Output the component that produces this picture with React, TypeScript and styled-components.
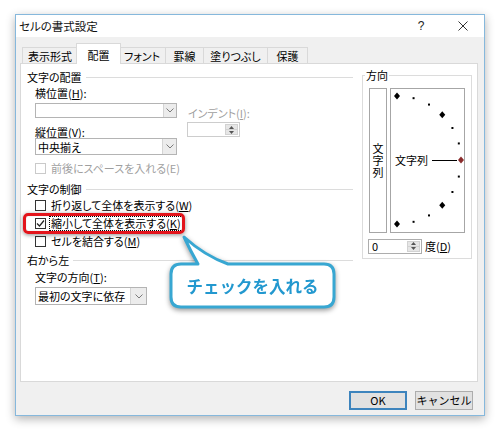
import React from "react";
import styled, { createGlobalStyle } from "styled-components";

const GlobalStyle = createGlobalStyle`
  html, body { margin: 0; padding: 0; background: #ffffff; }
  body {
    font-family: "Noto Sans CJK JP", "Noto Sans", sans-serif;
    font-feature-settings: "palt" 1;
    font-size: 11px;
    color: #000;
  }
  * { box-sizing: border-box; }
`;

const Stage = styled.div`
  position: relative;
  width: 500px;
  height: 431px;
  padding: 14px 0 0 15px;
  overflow: hidden;
`;

const Window = styled.div`
  width: 470px;
  height: 402px;
  border: 1px solid #86b8dc;
  background: #f0f0f0;
  box-shadow: 0 3px 9px rgba(0, 0, 0, 0.3);
  display: flex;
  flex-direction: column;
`;

const TitleBar = styled.div`
  height: 22px;
  background: #ffffff;
  display: flex;
  align-items: center;
  gap: 2px;
  padding: 0 1px 0 3px;
`;

const TitleText = styled.span`
  flex: 1;
  font-size: 11.5px;
  line-height: 22px;
  color: #111;
`;

const TitleButton = styled.span`
  width: 40px;
  height: 22px;
  display: flex;
  align-items: center;
  justify-content: center;
  font-family: "Liberation Sans", sans-serif;
  font-size: 12px;
  color: #222;
`;

const Body = styled.div`
  flex: 1;
  display: flex;
  flex-direction: column;
  padding: 0 6px 0 4px;
`;

const TabRow = styled.div`
  height: 26px;
  display: flex;
  align-items: flex-end;
  padding-left: 2px;
`;

const Tab = styled.div<{ $w: number; $active?: boolean; $first?: boolean }>`
  width: ${(p) => p.$w}px;
  height: ${(p) => (p.$active ? 21 : 16)}px;
  margin: ${(p) =>
    p.$active ? "0 -2px -1px -2px" : p.$first ? "0" : "0 0 0 -1px"};
  padding-top: ${(p) => (p.$active ? 1 : 0)}px;
  border: 1px solid #d9d9d9;
  border-bottom: none;
  background: ${(p) => (p.$active ? "#ffffff" : "#f0f0f0")};
  display: flex;
  align-items: center;
  justify-content: center;
  font-size: 11px;
  line-height: 14px;
  position: relative;
  z-index: ${(p) => (p.$active ? 2 : 1)};
`;

const Panel = styled.div`
  height: 319px;
  background: #ffffff;
  border: 1px solid #d9d9d9;
  display: flex;
  gap: 9px;
  padding: 6px 5px 0 6px;
`;

const LeftCol = styled.div`
  width: 326px;
  display: flex;
  flex-direction: column;
`;

const GroupHeader = styled.div<{ $mt?: number }>`
  margin-top: ${(p) => p.$mt ?? 0}px;
  display: flex;
  align-items: center;
  height: 14px;
  line-height: 14px;
  font-size: 11px;
  &::after {
    content: "";
    flex: 1;
    height: 1px;
    margin-left: 4px;
    background: #dcdcdc;
  }
`;

const FieldLabel = styled.div<{ $mt?: number; $disabled?: boolean; $indent?: number }>`
  margin-top: ${(p) => p.$mt ?? 0}px;
  padding-left: ${(p) => p.$indent ?? 8}px;
  height: 12px;
  line-height: 12px;
  font-size: 11px;
  white-space: nowrap;
  color: ${(p) => (p.$disabled ? "#9f9f9f" : "#000")};
`;

const ComboRow = styled.div<{ $mt?: number }>`
  margin-top: ${(p) => p.$mt ?? 0}px;
  display: flex;
  align-items: flex-start;
  gap: 10px;
`;

const Stack = styled.div<{ $pt?: number; $pl?: number }>`
  display: flex;
  flex-direction: column;
  padding-top: ${(p) => p.$pt ?? 0}px;
  padding-left: ${(p) => p.$pl ?? 0}px;
`;

const Combo = styled.div<{ $w: number; $h: number; $mt?: number; $ml?: number }>`
  width: ${(p) => p.$w}px;
  height: ${(p) => p.$h}px;
  margin-top: ${(p) => p.$mt ?? 0}px;
  margin-left: ${(p) => p.$ml ?? 0}px;
  border: 1px solid #b4b4b4;
  background: #ffffff;
  display: flex;
  align-items: stretch;
`;

const ComboText = styled.span`
  flex: 1;
  padding-left: 2px;
  display: flex;
  align-items: center;
  font-size: 11px;
  white-space: nowrap;
  overflow: hidden;
`;

const ComboButton = styled.span<{ $w: number }>`
  width: ${(p) => p.$w}px;
  border-left: 1px solid #d4d4d4;
  background: #ececec;
  display: flex;
  align-items: center;
  justify-content: center;
`;

const SpinBox = styled.div<{ $w: number; $h: number; $mt?: number; $disabled?: boolean }>`
  width: ${(p) => p.$w}px;
  height: ${(p) => p.$h}px;
  margin-top: ${(p) => p.$mt ?? 0}px;
  border: 1px solid ${(p) => (p.$disabled ? "#cdcdcd" : "#adadad")};
  background: #ffffff;
  display: flex;
  align-items: stretch;
  padding: 1px 1px 1px 0;
`;

const SpinValue = styled.span`
  flex: 1;
  padding-left: 3px;
  display: flex;
  align-items: center;
  font-size: 11px;
`;

const SpinButtons = styled.span`
  width: 13px;
  display: flex;
  flex-direction: column;
  background: #e6e6e6;
  border: 1px solid #d2d2d2;
`;

const SpinArrow = styled.span`
  flex: 1;
  display: flex;
  align-items: center;
  justify-content: center;
  & + & {
    border-top: 1px solid #d2d2d2;
  }
`;

const CheckRow = styled.div<{ $mt?: number; $disabled?: boolean }>`
  margin-top: ${(p) => p.$mt ?? 0}px;
  padding-left: 8px;
  height: 14px;
  display: flex;
  align-items: center;
  gap: 4px;
  color: ${(p) => (p.$disabled ? "#9f9f9f" : "#000")};
`;

const CheckBox = styled.span<{ $disabled?: boolean }>`
  width: 11px;
  height: 11px;
  border: 1px solid ${(p) => (p.$disabled ? "#cacaca" : "#333333")};
  background: #ffffff;
  display: flex;
  align-items: center;
  justify-content: center;
`;

const CheckLabel = styled.span<{ $focus?: boolean }>`
  font-size: 11px;
  line-height: 13px;
  white-space: nowrap;
  padding: 0 1px;
  outline: ${(p) => (p.$focus ? "1px dotted #000" : "none")};
`;

const OrientGroup = styled.fieldset`
  margin: -2px 0 0 0;
  padding: 0 6px 4px 2px;
  border: 1px solid #dcdcdc;
  width: 110px;
  align-self: flex-start;
  min-width: 0;
`;

const OrientLegend = styled.legend`
  padding: 0 1px;
  font-size: 11px;
  line-height: 14px;
`;

const OrientInner = styled.div`
  padding: 6px 0 0 4px;
  display: flex;
  flex-direction: column;
`;

const OrientBoxes = styled.div`
  display: flex;
  gap: 3px;
`;

const VerticalBox = styled.div`
  width: 18px;
  height: 145px;
  border: 1px solid #a6a6a6;
  display: flex;
  align-items: center;
  justify-content: center;
  padding-top: 1px;
`;

const VerticalText = styled.span`
  writing-mode: vertical-rl;
  text-orientation: upright;
  font-size: 11px;
  line-height: 14px;
  letter-spacing: 1px;
`;

const DialBox = styled.div`
  width: 75px;
  height: 145px;
  border: 1px solid #a6a6a6;
  display: flex;
`;

const DegreeRow = styled.div`
  margin-top: 5px;
  margin-left: -1px;
  display: flex;
  align-items: center;
  gap: 3px;
  font-size: 11px;
`;

const Footer = styled.div`
  flex: 1;
  display: flex;
  justify-content: flex-end;
  align-items: flex-start;
  gap: 8px;
  padding: 9px 5px 0 0;
`;

const DialogButton = styled.button<{ $default?: boolean }>`
  width: 58px;
  height: 19px;
  margin: 0;
  padding: 0;
  font-family: inherit;
  font-size: 11px;
  line-height: 1;
  color: #000;
  background: #e1e1e1;
  border: ${(p) => (p.$default ? "2px solid #3d84bd" : "1px solid #adadad")};
  display: flex;
  align-items: center;
  justify-content: center;
`;

const Highlight = styled.div`
  position: absolute;
  left: 23px;
  top: 213px;
  width: 162px;
  height: 21px;
  border: 3px solid #e3141b;
  border-radius: 5px;
  box-shadow: 0 1px 4px rgba(0, 0, 0, 0.45), inset 0 0 1px rgba(0, 0, 0, 0.3);
`;

const Callout = styled.div`
  position: absolute;
  left: 165px;
  top: 230px;
  width: 180px;
  height: 85px;
  filter: drop-shadow(0 2px 2.5px rgba(0, 0, 0, 0.4));
`;

const CalloutShape = styled.svg`
  position: absolute;
  left: 0;
  top: 0;
`;

const CalloutText = styled.div`
  position: absolute;
  left: 6px;
  top: 34px;
  width: 163px;
  height: 43px;
  display: flex;
  align-items: center;
  justify-content: center;
  font-size: 16.5px;
  font-weight: bold;
  font-feature-settings: normal;
  color: #2298cf;
  letter-spacing: 0;
`;

const Chevron = () => (
  <svg width="8" height="5" viewBox="0 0 8 5">
    <path d="M0.5 0.5 L4 4 L7.5 0.5" fill="none" stroke="#7a7a7a" strokeWidth="1" />
  </svg>
);

const ArrowUp = () => (
  <svg width="5" height="3" viewBox="0 0 5 3">
    <path d="M0 3 L2.5 0 L5 3 Z" fill="#555" />
  </svg>
);

const ArrowDown = () => (
  <svg width="5" height="3" viewBox="0 0 5 3">
    <path d="M0 0 L2.5 3 L5 0 Z" fill="#555" />
  </svg>
);

const CheckMark = () => (
  <svg width="9" height="9" viewBox="0 0 9 9">
    <path d="M1 4.5 L3.5 7 L8 1.5" fill="none" stroke="#222" strokeWidth="1.2" />
  </svg>
);

const CloseIcon = () => (
  <svg width="10" height="10" viewBox="0 0 10 10">
    <path d="M0.5 0.5 L9.5 9.5 M9.5 0.5 L0.5 9.5" stroke="#333" strokeWidth="1" />
  </svg>
);

const Dial = () => {
  const cx = 6;
  const cy = 71;
  const r = 64;
  const marks: React.ReactNode[] = [];
  for (let a = 90; a >= -90; a -= 15) {
    const rad = (a * Math.PI) / 180;
    const x = cx + r * Math.cos(rad);
    const y = cy - r * Math.sin(rad);
    if (a % 45 === 0) {
      marks.push(
        <polygon
          key={a}
          points={`${x},${y - 3.5} ${x + 3},${y} ${x},${y + 3.5} ${x - 3},${y}`}
          fill={a === 0 ? "#8a2c2c" : "#000"}
        />
      );
    } else {
      marks.push(<rect key={a} x={x - 1} y={y - 1} width={2} height={2} fill="#000" />);
    }
  }
  return (
    <svg width="73" height="143" viewBox="0 0 73 143">
      <text
        x="4"
        y="71"
        dominantBaseline="central"
        fontSize="11"
        fontFamily='"Noto Sans CJK JP", sans-serif'
        fill="#000"
      >
        文字列
      </text>
      <line x1="41" y1="71.5" x2="66" y2="71.5" stroke="#000" strokeWidth="1" />
      {marks}
    </svg>
  );
};

const tabs = [
  { label: "表示形式", w: 56 },
  { label: "配置", w: 45, active: true },
  { label: "フォント", w: 48 },
  { label: "罫線", w: 39 },
  { label: "塗りつぶし", w: 65 },
  { label: "保護", w: 41 },
];

export default function App() {
  return (
    <>
      <GlobalStyle />
      <Stage>
        <Window>
          <TitleBar>
            <TitleText>セルの書式設定</TitleText>
            <TitleButton>?</TitleButton>
            <TitleButton>
              <CloseIcon />
            </TitleButton>
          </TitleBar>
          <Body>
            <TabRow>
              {tabs.map((t, i) => (
                <Tab key={t.label} $w={t.w} $active={t.active} $first={i === 0}>
                  {t.label}
                </Tab>
              ))}
            </TabRow>
            <Panel>
              <LeftCol>
                <GroupHeader>文字の配置</GroupHeader>
                <FieldLabel $mt={3}>
                  横位置(<u>H</u>):
                </FieldLabel>
                <ComboRow $mt={4}>
                  <Stack>
                    <Combo $w={142} $h={15} $ml={8}>
                      <ComboText />
                      <ComboButton $w={13}>
                        <Chevron />
                      </ComboButton>
                    </Combo>
                    <FieldLabel $mt={8}>
                      縦位置(<u>V</u>):
                    </FieldLabel>
                    <Combo $w={142} $h={17} $ml={8}>
                      <ComboText>中央揃え</ComboText>
                      <ComboButton $w={14}>
                        <Chevron />
                      </ComboButton>
                    </Combo>
                  </Stack>
                  <Stack $pt={4}>
                    <FieldLabel $disabled $indent={1}>
                      インデント(<u>I</u>):
                    </FieldLabel>
                    <SpinBox $w={53} $h={15} $mt={3} $disabled>
                      <SpinValue />
                      <SpinButtons>
                        <SpinArrow>
                          <ArrowUp />
                        </SpinArrow>
                        <SpinArrow>
                          <ArrowDown />
                        </SpinArrow>
                      </SpinButtons>
                    </SpinBox>
                  </Stack>
                </ComboRow>
                <CheckRow $mt={6} $disabled>
                  <CheckBox $disabled />
                  <CheckLabel>前後にスペースを入れる(E)</CheckLabel>
                </CheckRow>
                <GroupHeader $mt={7}>文字の制御</GroupHeader>
                <CheckRow $mt={2}>
                  <CheckBox />
                  <CheckLabel>
                    折り返して全体を表示する(<u>W</u>)
                  </CheckLabel>
                </CheckRow>
                <CheckRow $mt={4}>
                  <CheckBox>
                    <CheckMark />
                  </CheckBox>
                  <CheckLabel $focus>
                    縮小して全体を表示する(<u>K</u>)
                  </CheckLabel>
                </CheckRow>
                <CheckRow $mt={4}>
                  <CheckBox />
                  <CheckLabel>
                    セルを結合する(<u>M</u>)
                  </CheckLabel>
                </CheckRow>
                <GroupHeader $mt={5}>右から左</GroupHeader>
                <FieldLabel $mt={4}>
                  文字の方向(<u>T</u>):
                </FieldLabel>
                <Combo $w={112} $h={18} $mt={4} $ml={8}>
                  <ComboText>最初の文字に依存</ComboText>
                  <ComboButton $w={16}>
                    <Chevron />
                  </ComboButton>
                </Combo>
              </LeftCol>
              <OrientGroup>
                <OrientLegend>方向</OrientLegend>
                <OrientInner>
                  <OrientBoxes>
                    <VerticalBox>
                      <VerticalText>文字列</VerticalText>
                    </VerticalBox>
                    <DialBox>
                      <Dial />
                    </DialBox>
                  </OrientBoxes>
                  <DegreeRow>
                    <SpinBox $w={54} $h={15}>
                      <SpinValue>0</SpinValue>
                      <SpinButtons>
                        <SpinArrow>
                          <ArrowUp />
                        </SpinArrow>
                        <SpinArrow>
                          <ArrowDown />
                        </SpinArrow>
                      </SpinButtons>
                    </SpinBox>
                    <span>
                      度(<u>D</u>)
                    </span>
                  </DegreeRow>
                </OrientInner>
              </OrientGroup>
            </Panel>
            <Footer>
              <DialogButton $default>OK</DialogButton>
              <DialogButton>キャンセル</DialogButton>
            </Footer>
          </Body>
        </Window>
        <Highlight />
        <Callout>
          <CalloutShape width="180" height="85" viewBox="0 0 180 85">
            <path
              d="M16 34 L33 34 Q26 22 19 7 Q40 26 63 34 L159 34 Q169 34 169 44 L169 67 Q169 77 159 77 L16 77 Q6 77 6 67 L6 44 Q6 34 16 34 Z"
              fill="#ffffff"
              stroke="#38a7d2"
              strokeWidth="3"
              strokeLinejoin="round"
            />
          </CalloutShape>
          <CalloutText>チェックを入れる</CalloutText>
        </Callout>
      </Stage>
    </>
  );
}
